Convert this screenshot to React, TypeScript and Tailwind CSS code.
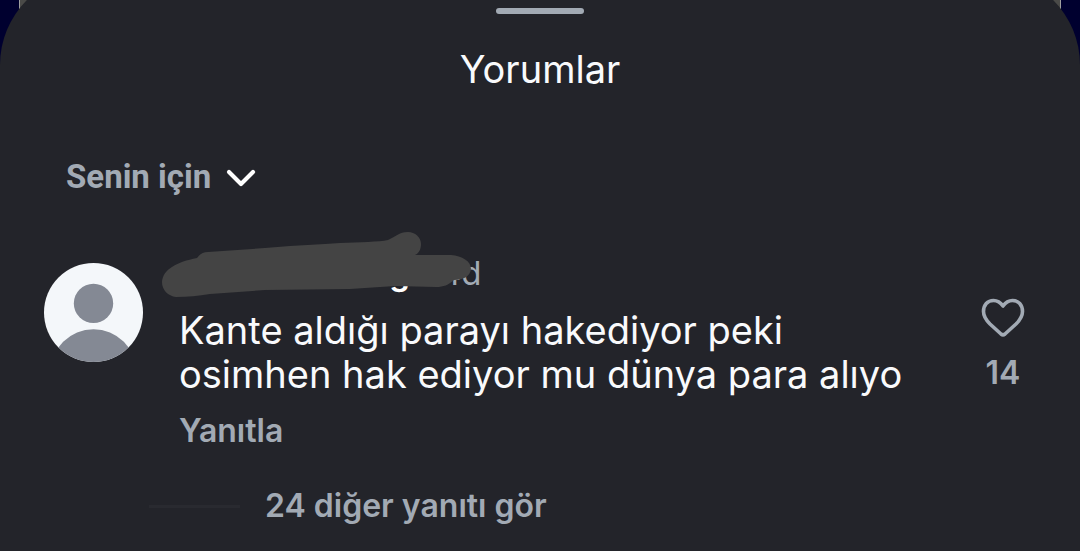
import { useState } from "react";

const comment = {
  user: "g",
  age: "4d",
  text: "Kante aldığı parayı hakediyor peki osimhen hak ediyor mu dünya para alıyo",
  likes: 14,
  replies: 24,
};

function Avatar() {
  return (
    <svg viewBox="0 0 98 98" className="mt-2 size-[99px] shrink-0 rounded-full" aria-hidden="true">
      <rect width="98" height="98" fill="#f4f7fa" />
      <circle cx="49" cy="40" r="19.5" fill="#848994" />
      <circle cx="49" cy="108" r="42.5" fill="#848994" />
    </svg>
  );
}

function Scribble() {
  return (
    <svg
      viewBox="0 0 350 90"
      className="absolute -left-[29px] -top-[35px] h-[90px] w-[350px]"
      aria-hidden="true"
    >
      <path
        d="M47 38C50 34 53 32 58 32L115 28L140 26L175 24L190 23C210 22 229 22 238 20C245 17 249 12 258 12C265 12 271 17 271 24C271 29 269 33 265 35L301 35C312 36 321 41 321 49C320 56 314 60 304 60C298 65 294 67 286 67L245 66L200 69L115 70L60 74C48 76 38 77 26 77C18 76 12 70 12 62C13 49 27 42 47 38Z"
        fill="#444444"
      />
    </svg>
  );
}

export default function App() {
  const [liked, setLiked] = useState(false);

  return (
    <div className="relative min-h-screen overflow-hidden bg-[#00002f] font-['Inter','Liberation_Sans',sans-serif]">
      <div className="absolute inset-x-[19px] top-0 h-8 border-x border-[#a0a0a0] bg-[#4a4a48]" />
      <main className="relative -mt-[27px] flex min-h-[calc(100vh+27px)] flex-col rounded-t-[92px] bg-[#23242a] pt-[35px]">
        <div className="mx-auto h-[6px] w-[88px] rounded-full bg-[#a2aab4]" />
        <h1 className="mt-[31px] text-center text-[38px] leading-[48px] text-[#f9fafc]">Yorumlar</h1>

        <button className="ml-[66px] mt-[60px] flex items-center gap-[15px] self-start font-['Roboto',sans-serif] text-[33px] font-bold leading-[48px] text-[#a2aab4]">
          Senin için
          <svg viewBox="0 0 30 20" className="mt-[2px] h-5 w-[30px]" fill="none" aria-hidden="true">
            <path
              d="M3 4L15 16L27 4"
              stroke="#fff"
              strokeWidth="4.2"
              strokeLinecap="round"
              strokeLinejoin="round"
            />
          </svg>
        </button>

        <article className="mt-[54px] flex pl-11 pr-[52px]">
          <Avatar />
          <div className="ml-9 min-w-0 flex-1">
            <div className="relative flex h-[53px] items-start text-[33px] leading-9">
              <span className="w-[231px] text-right font-semibold text-white">{comment.user}</span>
              <time className="ml-[30px] text-[#a2aab4]">{comment.age}</time>
              <Scribble />
            </div>
            <p className="max-w-[740px] text-[38px] leading-[44px] text-[#f9fafc]">{comment.text}</p>
            <button className="mt-[13px] block text-[32px] font-semibold leading-[44px] text-[#a2aab4]">
              Yanıtla
            </button>
          </div>
          <button
            className="mt-[43px] flex w-[50px] flex-col items-center self-start text-[32px] font-semibold leading-[44px] text-[#a2aab4]"
            aria-label="Beğen"
            aria-pressed={liked}
            onClick={() => setLiked(!liked)}
          >
            <svg viewBox="0 0 44 40" className="h-10 w-11" fill="none" aria-hidden="true">
              <path
                d="M22 8C19 3.800 16 2.500 12.500 2.500C6.500 2.500 2.500 7 2.500 13.500C2.500 19 5 22 9 26L20 36C21.500 37.200 22.500 37.200 24 36L35 26C39 22 41.500 19 41.500 13.500C41.500 7 37.500 2.500 31.500 2.500C28 2.500 25 3.800 22 8Z"
                stroke="#a2aab4"
                strokeWidth="3.6"
                strokeLinejoin="round"
                fill={liked ? "#a2aab4" : "none"}
              />
            </svg>
            <span className="mt-[13px]">{comment.likes}</span>
          </button>
        </article>

        <div className="ml-[149px] mt-[31px] flex items-center gap-[25px]">
          <span className="h-[3px] w-[91px] bg-[#292a30]" />
          <button className="text-[32px] font-semibold leading-[44px] text-[#a2aab4]">
            {comment.replies} diğer yanıtı gör
          </button>
        </div>
      </main>
    </div>
  );
}
